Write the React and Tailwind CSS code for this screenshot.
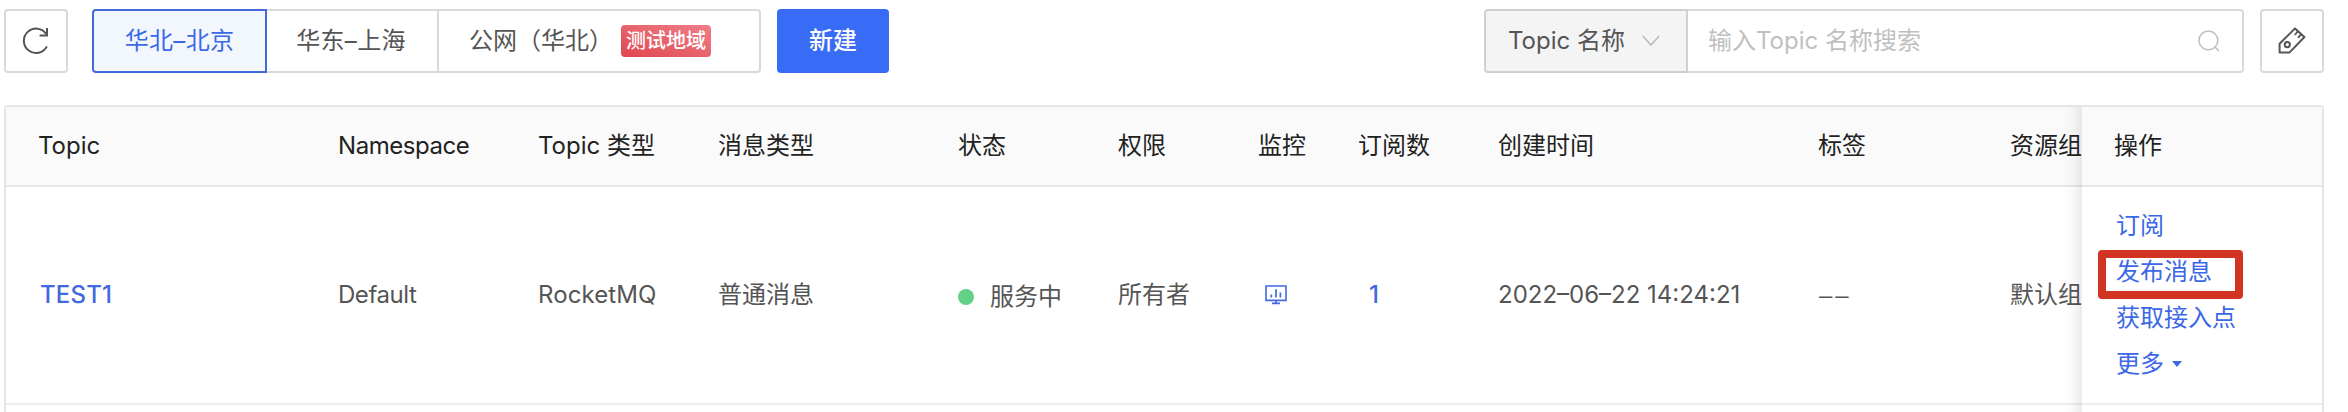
import React from "react";

const columns = [
  { title: "Topic", width: "w-[300px]" },
  { title: "Namespace", width: "w-[200px] tracking-[-0.45px]" },
  { title: "Topic 类型", width: "w-[180px]" },
  { title: "消息类型", width: "w-[240px]" },
  { title: "状态", width: "w-[160px]" },
  { title: "权限", width: "w-[140px]" },
  { title: "监控", width: "w-[100px]" },
  { title: "订阅数", width: "w-[140px]" },
  { title: "创建时间", width: "w-[320px]" },
  { title: "标签", width: "w-[192px]" },
  { title: "资源组", width: "w-[104px]" },
];

function RefreshIcon() {
  return (
    <svg width="28" height="28" viewBox="0 0 28 28" fill="none" stroke="#555" strokeWidth="2">
      <path d="M24.9 19.4A12.2 12.2 0 1 1 24.3 7.2" />
      <path d="M25 1v7.4h-7.4" />
    </svg>
  );
}

function TagIcon() {
  return (
    <svg width="28" height="28" viewBox="0 0 28 28" fill="none" stroke="#555" strokeWidth="2">
      <path d="M1.6 25.6V16.8L17 1.4 26.4 10 11.4 25.6z" strokeLinejoin="round" />
      <circle cx="9.3" cy="17.6" r="2.6" />
      <path d="M20 4.2l-3.2 3.8M23.2 7.1 20 10.9" strokeWidth="1.8" />
    </svg>
  );
}

function MonitorIcon() {
  return (
    <svg width="22" height="20" viewBox="0 0 22 20" fill="none" stroke="#4169e1">
      <path d="M1 1h20v14.4H1z" strokeWidth="1.6" />
      <path d="M6.3 12.5V9.6M11 12.5V4.2M15.4 12.5V7.4" strokeWidth="1.7" />
      <path d="M11 15.4v3M7 18.4h8" strokeWidth="1.7" />
    </svg>
  );
}

function Region({ children, className }) {
  return <div className={"flex h-16 shrink-0 items-center whitespace-pre " + className}>{children}</div>;
}

function Toolbar() {
  return (
    <div className="flex h-16 w-[2320px] items-center text-[#555]">
      <button className="flex size-16 items-center justify-center rounded-[4px] border-2 border-[#d9d9d9]">
        <RefreshIcon />
      </button>
      <div className="ml-6 flex">
        <Region className="w-[175px] justify-center rounded-l-[4px] border-2 border-[#4169d8] bg-[#f2f7fe] tracking-[0.3px] text-[#3b68e6]">
          华北–北京
        </Region>
        <Region className="w-[172px] justify-center border-y-2 border-r-2 border-[#d9d9d9] pr-[2px] tracking-[0.3px]">华东–上海</Region>
        <Region className="w-[322px] rounded-r-[4px] border-y-2 border-r-2 border-[#d9d9d9] pl-[30px]">
          公网（华北）
          <span className="ml-[8px] flex h-8 w-[90px] items-center justify-center rounded-[4px] bg-linear-to-tr from-[#e04550] to-[#ee7d87] text-[20px] font-medium text-white">
            测试地域
          </span>
        </Region>
      </div>
      <button className="ml-4 h-16 w-28 rounded-[4px] bg-[#386bf6] font-medium text-white">新建</button>
      <div className="ml-auto flex h-16 w-[760px]">
        <div className="flex w-[204px] items-center rounded-l-[4px] border-2 border-[#d0d0d0] bg-[#f4f4f4] pl-[22px]">
          <span className="w-[118px] shrink-0 whitespace-nowrap">Topic 名称</span>
          <svg className="ml-[16px]" width="18" height="12" viewBox="0 0 18 12" fill="none" stroke="#bbb" strokeWidth="1.6">
            <path d="M.8 1 9 10 17.2 1" />
          </svg>
        </div>
        <div className="flex flex-1 items-center justify-between rounded-r-[4px] border-y-2 border-r-2 border-[#d9d9d9] pr-[22px] pl-[20px] text-[#bfbfbf]">
          <span>输入Topic 名称搜索</span>
          <svg width="22" height="22" viewBox="0 0 22 22" fill="none" stroke="#bfbfbf" strokeWidth="1.6">
            <circle cx="10.4" cy="10.4" r="9.4" />
            <path d="M17.2 17.2 21 21" />
          </svg>
        </div>
      </div>
      <button className="ml-4 flex size-16 items-center justify-center rounded-[4px] border-2 border-[#d9d9d9]">
        <TagIcon />
      </button>
    </div>
  );
}

function Cell({ width, children }) {
  return <div className={"flex shrink-0 items-center whitespace-nowrap " + width}>{children}</div>;
}

function TopicTable() {
  const cells = [
    <span className="pl-[2px] font-medium tracking-[0.2px] text-[#4169e1]">TEST1</span>,
    "Default",
    <span className="tracking-[0.1px]">RocketMQ</span>,
    "普通消息",
    <span className="flex items-center pt-1">
      <i className="mr-4 size-4 rounded-full bg-[#62d186]" />
      服务中
    </span>,
    "所有者",
    <span className="pl-[7px]"><MonitorIcon /></span>,
    <span className="pl-[11px] font-medium text-[#4169e1]">1</span>,
    "2022–06–22 14:24:21",
    <span className="flex gap-[3px] pl-px font-['Liberation_Sans',sans-serif]"><span>–</span><span>–</span></span>,
    "默认组",
  ];
  return (
    <div className="mt-8 flex h-[307px] w-[2320px] overflow-hidden rounded-t-[4px] border-x-2 border-t-2 border-[#e5e5e5]">
      <div className="relative w-[2076px] shrink-0 overflow-hidden">
        <div className="flex h-20 border-b-2 border-[#e8e8e8] bg-[#fafafa] pl-8 text-[#222]">
          {columns.map((c) => (
            <Cell key={c.title} width={c.width}>{c.title}</Cell>
          ))}
        </div>
        <div className="flex h-[218px] border-b-2 border-[#eee] pl-8 text-[#555]">
          {columns.map((c, i) => (
            <Cell key={c.title} width={c.width}>{cells[i]}</Cell>
          ))}
        </div>
        <div className="absolute inset-y-0 right-0 w-5 bg-linear-to-r from-black/0 via-black/2 to-black/8" />
      </div>
      <div className="flex-1">
        <div className="flex h-20 items-center border-b-2 border-[#e8e8e8] bg-[#fafafa] pl-8 text-[#222]">操作</div>
        <div className="relative flex h-[218px] flex-col justify-center border-b-2 border-[#eee] pl-[34px] leading-[46px] text-[#3b68e6]">
          <a>订阅</a>
          <a>发布消息</a>
          <a>获取接入点</a>
          <a className="flex items-center">
            更多
            <svg className="ml-2" width="10" height="6" viewBox="0 0 10 6" fill="#3b68e6">
              <path d="M0 0h10L5 6z" />
            </svg>
          </a>
          <div className="absolute top-[63px] left-4 h-[49px] w-[145px] rounded-[4px] border-8 border-[#d23423]" />
        </div>
      </div>
    </div>
  );
}

export default function App() {
  return (
    <div className="h-[412px] w-[2348px] overflow-hidden bg-white pt-[9px] pl-1 font-['Inter','Noto_Sans_CJK_SC',sans-serif] text-[24px] leading-[34px]">
      <Toolbar />
      <TopicTable />
    </div>
  );
}
